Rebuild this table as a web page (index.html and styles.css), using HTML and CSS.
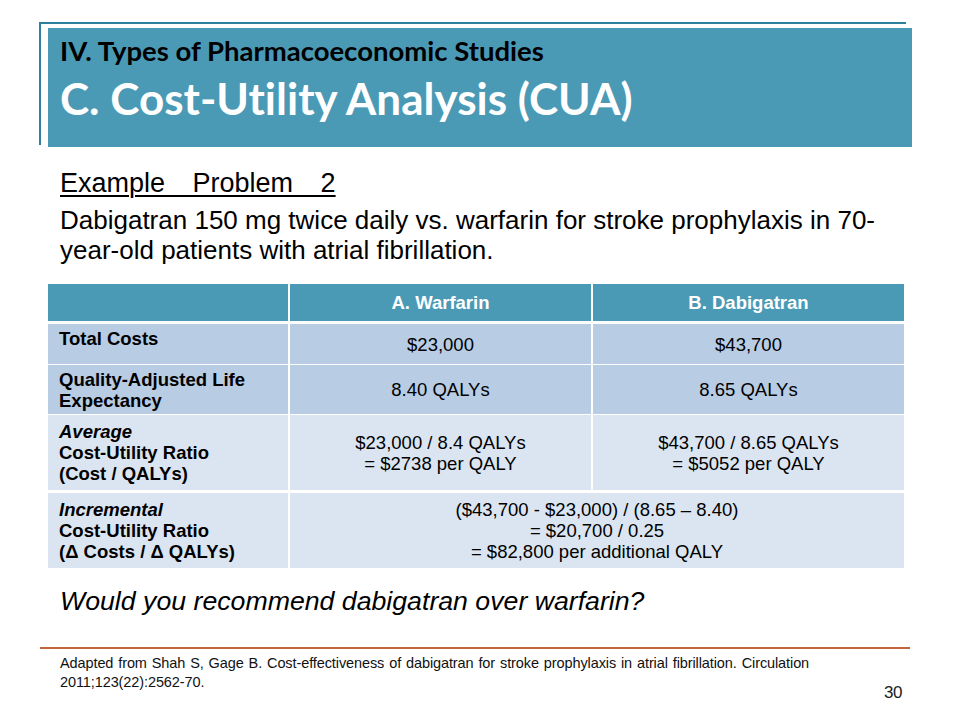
FILE: index.html
```html
<!DOCTYPE html>
<html>
<head>
<meta charset="utf-8">
<link rel="stylesheet" href="styles.css">
</head>
<body>
<div class="slide">
  <div class="frame">
    <div class="title-box">
      <div class="kicker">IV. Types of Pharmacoeconomic Studies</div>
      <div class="title">C. Cost-Utility Analysis (CUA)</div>
    </div>
  </div>
  <div class="content">
    <div class="subhead">Example Problem 2</div>
    <p class="lead">Dabigatran 150 mg twice daily vs. warfarin for stroke prophylaxis in 70-year-old patients with atrial fibrillation.</p>
  </div>
  <table class="data">
    <colgroup>
      <col class="c1"><col class="c2"><col class="c3">
    </colgroup>
    <thead>
      <tr><th></th><th>A. Warfarin</th><th>B. Dabigatran</th></tr>
    </thead>
    <tbody>
      <tr class="dark r1">
        <td class="label top">Total Costs</td><td>$23,000</td><td>$43,700</td>
      </tr>
      <tr class="dark r2">
        <td class="label">Quality-Adjusted Life<br>Expectancy</td><td>8.40 QALYs</td><td>8.65 QALYs</td>
      </tr>
      <tr class="light r3">
        <td class="label"><i>Average</i><br>Cost-Utility Ratio<br>(Cost / QALYs)</td>
        <td>$23,000 / 8.4 QALYs<br>= $2738 per QALY</td>
        <td>$43,700 / 8.65 QALYs<br>= $5052 per QALY</td>
      </tr>
      <tr class="light r4">
        <td class="label"><i>Incremental</i><br>Cost-Utility Ratio<br>(&Delta; Costs / &Delta; QALYs)</td>
        <td colspan="2" class="inc">($43,700 - $23,000) / (8.65 &ndash; 8.40)<br>= $20,700 / 0.25<br>= $82,800 per additional QALY</td>
      </tr>
    </tbody>
  </table>
  <div class="content">
    <p class="question">Would you recommend dabigatran over warfarin?</p>
  </div>
  <div class="footer">
    <p class="ref">Adapted from Shah S, Gage B. Cost-effectiveness of dabigatran for stroke prophylaxis in atrial fibrillation. Circulation 2011;123(22):2562-70.</p>
    <div class="page">30</div>
  </div>
</div>
</body>
</html>
```

FILE: styles.css
```css
html, body {
  margin: 0;
  padding: 0;
  background: #ffffff;
}
.slide {
  width: 960px;
  height: 720px;
  overflow: hidden;
  font-family: "Liberation Sans", Arial, sans-serif;
  color: #000;
}
.frame {
  margin: 22px 0 0 39px;
  width: 865px;
  height: 121px;
  border-top: 2px solid #2f7f9f;
  border-left: 2px solid #2f7f9f;
}
.title-box {
  margin: 4px 0 0 7px;
  width: 864px;
  height: 119px;
  background: #4a9ab6;
  box-sizing: border-box;
  padding: 6px 0 0 12px;
  font-family: Lato, "Open Sans", sans-serif;
  font-weight: bold;
  font-variant-ligatures: none;
}
.kicker {
  font-size: 27.5px;
  line-height: 34px;
  color: #000;
}
.title {
  margin-top: 3px;
  font-size: 44px;
  line-height: 54px;
  color: #fff;
}
.content {
  padding-left: 60px;
  padding-right: 50px;
}
.subhead {
  margin-top: 23px;
  font-size: 27px;
  line-height: 31px;
  word-spacing: 20px;
  text-decoration: underline;
  text-decoration-thickness: 2px;
  text-underline-offset: 3px;
}
.lead {
  margin: 6px 0 0;
  font-size: 26px;
  line-height: 30px;
}
.data {
  margin: 19px 0 0 48px;
  width: 856px;
  border-collapse: collapse;
  font-size: 18.5px;
  line-height: 21px;
}
.c1 { width: 241px; }
.c2 { width: 303px; }
.c3 { width: 312px; }
.data th {
  background: #4a9ab6;
  color: #fff;
  height: 37px;
  padding: 0;
  font-weight: bold;
  text-align: center;
  border-bottom: 3px solid #fff;
  border-left: 2px solid #ffffff;
}
.data th:first-child { border-left: 0; }
.data td {
  text-align: center;
  padding: 0;
  border-top: 1px solid #fff;
  border-left: 2px solid #fff;
}
.data td.label {
  text-align: left;
  font-weight: bold;
  padding-left: 11px;
  border-left: 0;
}
.data td.top { vertical-align: top; padding-top: 4px; }
.dark td { background: #b8cce4; }
.light td { background: #dbe5f1; }
.r1 td { height: 36px; }
.r2 td { height: 49px; }
.r3 td { height: 75px; }
.r4 td { height: 75px; border-top: 3px solid #fff; }
.question {
  margin: 17px 0 0;
  font-size: 26.7px;
  font-style: italic;
  line-height: 32px;
}
.footer {
  margin: 30px 0 0 40px;
  width: 870px;
  border-top: 2px solid #c2653a;
  padding: 5px 0 0 20px;
  box-sizing: border-box;
  display: flex;
  justify-content: space-between;
  align-items: flex-end;
}
.ref {
  margin: 0;
  width: 770px;
  font-size: 14.5px;
  letter-spacing: -0.1px;
  word-spacing: 1px;
  line-height: 19px;
  color: #111;
}
.page {
  font-size: 17px;
  letter-spacing: -0.5px;
  color: #222;
  margin-right: 8px;
  margin-bottom: -11px;
}
```
